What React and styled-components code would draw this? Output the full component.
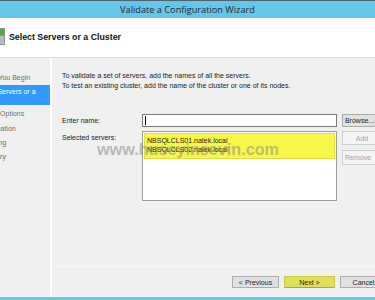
import React from 'react';
import styled, { createGlobalStyle } from 'styled-components';

const colors = {
  chrome: '#65c6e7',
  chromeEdge: '#4f6470',
  panel: '#f0f0f0',
  white: '#ffffff',
  select: '#3399ff',
  text: '#1a1a1a',
  muted: '#6d6d6d',
  highlight: '#f7f74a',
};

const GlobalStyle = createGlobalStyle`
  html, body {
    margin: 0;
    padding: 0;
    background: ${colors.panel};
  }
  * { box-sizing: border-box; }
`;

const Window = styled.div`
  position: relative;
  width: 375px;
  height: 300px;
  overflow: hidden;
  display: flex;
  flex-direction: column;
  background: ${colors.panel};
  font-family: 'Liberation Sans', Arial, sans-serif;
  color: ${colors.text};
`;

const TitleBar = styled.div`
  height: 18px;
  flex: none;
  border-top: 1px solid ${colors.chromeEdge};
  background: ${colors.chrome};
  display: flex;
  align-items: center;
  justify-content: center;
  font-family: 'Open Sans', 'Noto Sans', sans-serif;
  font-size: 9.2px;
  color: #1d2b33;
`;

const Header = styled.div`
  height: 40px;
  flex: none;
  background: ${colors.white};
  border-bottom: 1px solid #dcdcdc;
  display: flex;
  align-items: center;
  gap: 4px;
  padding-bottom: 2px;
`;

const HeaderTitle = styled.h1`
  margin: 0;
  font-size: 8.8px;
  font-weight: bold;
  color: #111;
`;

const Body = styled.div`
  flex: 1;
  display: flex;
  min-height: 0;
`;

const Nav = styled.ul`
  width: 52px;
  flex: none;
  margin: 0;
  padding: 13px 0 0;
  list-style: none;
  border-right: 2px solid ${colors.white};
  overflow: hidden;
  display: flex;
  flex-direction: column;
`;

const NavItem = styled.li`
  flex: none;
  width: 74px;
  height: ${p => (p.active ? '20px' : '14.3px')};
  margin: 0 0 ${p => (p.active ? '2px' : '0')} -24px;
  padding-top: ${p => (p.active ? '2px' : '0')};
  background: ${p => (p.active ? colors.select : 'transparent')};
  color: ${p => (p.active ? colors.white : colors.muted)};
  font-size: 7px;
  line-height: ${p => (p.active ? '9px' : '14px')};
  white-space: ${p => (p.active ? 'normal' : 'nowrap')};
  overflow: hidden;
`;

const Content = styled.div`
  flex: 1;
  min-width: 0;
  display: flex;
  flex-direction: column;
  padding-left: 10px;
`;

const Intro = styled.p`
  margin: 13px 0 0;
  font-size: 7px;
  line-height: 10px;
  white-space: nowrap;
`;

const FormGrid = styled.div`
  margin-top: 23px;
  display: grid;
  grid-template-columns: 75px 195px minmax(0, 1fr);
  column-gap: 5px;
  row-gap: 4px;
  align-items: start;
`;

const Label = styled.span`
  font-size: 7px;
  line-height: 10px;
  padding-top: ${p => p.offset || 2}px;
`;

const TextInput = styled.div`
  height: 13px;
  background: ${colors.white};
  border: 1px solid #7a7a7a;
  display: flex;
  align-items: center;
  padding-left: 2px;
  &::before {
    content: '';
    width: 1px;
    height: 9px;
    background: #000;
  }
`;

const ListBox = styled.div`
  height: 70px;
  background: ${colors.white};
  border: 1px solid #9a9ca3;
  padding: 1px;
`;

const Selection = styled.div`
  background: ${colors.highlight};
  border: 1px solid #e0e03a;
  padding: 2px 2px 4px;
`;

const ListEntry = styled.div`
  font-size: 7px;
  line-height: 9px;
  white-space: nowrap;
`;

const ButtonColumn = styled.div`
  display: flex;
  flex-direction: column;
  gap: 5px;
`;

const Button = styled.button`
  flex: none;
  width: ${p => p.width || 50}px;
  height: ${p => p.height || 13}px;
  margin: 0;
  padding: 0;
  font-family: 'Liberation Sans', Arial, sans-serif;
  font-size: 7px;
  color: ${p => (p.disabled ? '#a3a3a3' : '#1a1a1a')};
  background: ${p => (p.primary ? '#dfe05a' : p.disabled ? '#f4f4f4' : '#e1e1e1')};
  border: 1px solid ${p => (p.primary ? '#c9c93b' : p.disabled ? '#cfcfcf' : '#acacac')};
  border-bottom-color: ${p => (p.primary ? '#7aa7c9' : p.disabled ? '#cfcfcf' : '#acacac')};
  text-align: ${p => p.align || 'center'};
  white-space: nowrap;
  overflow: hidden;
`;

const Spacer = styled.div`
  flex: 1;
`;

const Footer = styled.div`
  flex: none;
  height: 31px;
  border-top: 1px solid #f8f8f8;
  margin-left: -10px;
  margin-right: -12px;
  display: flex;
  justify-content: flex-end;
  align-items: flex-start;
  padding-top: 9px;
  gap: 5px;
`;

const BottomEdge = styled.div`
  height: 3px;
  flex: none;
  background: ${colors.chrome};
`;

const Watermark = styled.div`
  position: absolute;
  left: 97px;
  top: 140px;
  font-family: 'Liberation Sans', Arial, sans-serif;
  font-weight: bold;
  font-size: 16.2px;
  color: rgba(130, 130, 130, 0.5);
  pointer-events: none;
  white-space: nowrap;
`;

const WizardIcon = () => (
  <svg width="5" height="17" viewBox="0 0 5 17">
    <rect x="0" y="0" width="5" height="17" fill="#8c9196" />
    <rect x="0" y="1" width="4" height="6" fill="#4cae3a" />
    <rect x="0" y="8" width="4" height="8" fill="#b8bcc0" />
  </svg>
);

const steps = [
  'Before You Begin',
  'Select Servers or a Cluster',
  'Testing Options',
  'Confirmation',
  'Validating',
  'Summary',
];
const servers = ['NBSQLCLS01.natek.local', 'NBSQLCLS02.natek.local'];

export default function App() {
  return (
    <>
      <GlobalStyle />
      <Window>
        <TitleBar>Validate a Configuration Wizard</TitleBar>
        <Header>
          <WizardIcon />
          <HeaderTitle>Select Servers or a Cluster</HeaderTitle>
        </Header>
        <Body>
          <Nav>
            {steps.map((s, i) => (
              <NavItem key={s} active={i === 1}>{s}</NavItem>
            ))}
          </Nav>
          <Content>
            <Intro>
              To validate a set of servers, add the names of all the servers.
              <br />
              To test an existing cluster, add the name of the cluster or one of its nodes.
            </Intro>
            <FormGrid>
              <Label>Enter name:</Label>
              <TextInput />
              <Button width={40} align="left">&nbsp;Browse...</Button>
              <Label offset={0}>Selected servers:</Label>
              <ListBox>
                <Selection>
                  {servers.map(s => (
                    <ListEntry key={s}>{s}</ListEntry>
                  ))}
                </Selection>
              </ListBox>
              <ButtonColumn>
                <Button width={40} height={14} disabled>Add</Button>
                <Button width={40} height={15} disabled align="left">&nbsp;Remove</Button>
              </ButtonColumn>
            </FormGrid>
            <Spacer />
            <Footer>
              <Button width={47} height={12}>&lt; Previous</Button>
              <Button width={51} height={12} primary>Next &gt;</Button>
              <Button width={47} height={12}>Cancel</Button>
            </Footer>
          </Content>
        </Body>
        <BottomEdge />
        <Watermark>www.huseyinsevin.com</Watermark>
      </Window>
    </>
  );
}
